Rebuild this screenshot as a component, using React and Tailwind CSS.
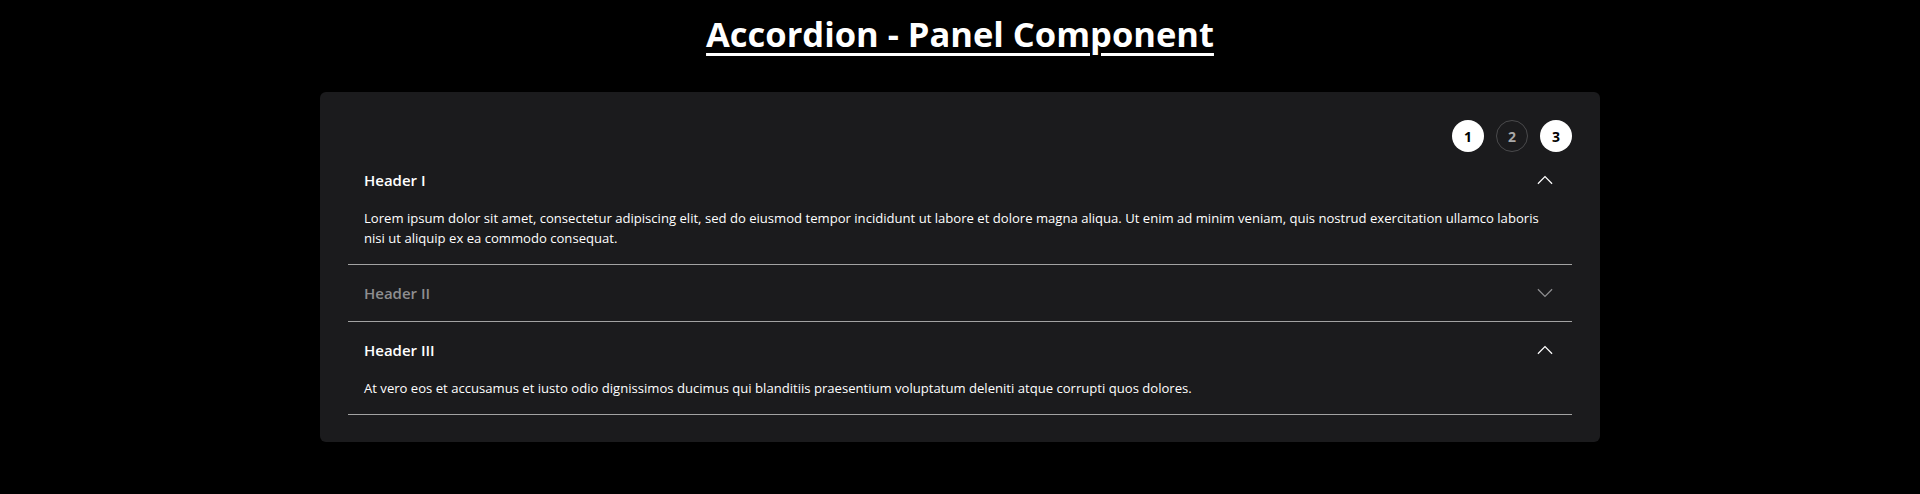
import { useState } from 'react';

const items = [
  {
    id: 1,
    title: 'Header I',
    body: 'Lorem ipsum dolor sit amet, consectetur adipiscing elit, sed do eiusmod tempor incididunt ut labore et dolore magna aliqua. Ut enim ad minim veniam, quis nostrud exercitation ullamco laboris nisi ut aliquip ex ea commodo consequat.',
  },
  {
    id: 2,
    title: 'Header II',
    body: 'Duis aute irure dolor in reprehenderit in voluptate velit esse cillum dolore eu fugiat nulla pariatur.',
  },
  {
    id: 3,
    title: 'Header III',
    body: 'At vero eos et accusamus et iusto odio dignissimos ducimus qui blanditiis praesentium voluptatum deleniti atque corrupti quos dolores.',
  },
];

function Chevron({ up }) {
  return (
    <svg viewBox="0 0 20 12" fill="none" stroke="currentColor" strokeWidth={1.5} className="w-[18px] h-[10px] mr-[2px]">
      {up ? <polyline points="1.5,10.5 10,2 18.5,10.5" /> : <polyline points="1.5,1.5 10,10 18.5,1.5" />}
    </svg>
  );
}

export default function App() {
  const [open, setOpen] = useState(new Set([1, 3]));

  const toggle = (id) => {
    setOpen(prev => {
      const next = new Set(prev);
      if (next.has(id)) next.delete(id);
      else next.add(id);
      return next;
    });
  };

  return (
    <div
      className="min-h-screen bg-black text-white pt-[10px]"
      style={{ fontFamily: '"Open Sans", "Noto Sans", sans-serif' }}
    >
      <h1 className="text-center text-[34.5px] leading-[48px] font-bold underline underline-offset-[6px] decoration-[3px]">
        Accordion - Panel Component
      </h1>

      <div className="mx-auto mt-[34px] w-[1280px] rounded-md bg-[#1b1b1d] px-7 pt-7 pb-[27px]">
        {/* toggles */}
        <div className="flex justify-end gap-3">
          {items.map(item => {
            const active = open.has(item.id);
            return (
              <button
                key={item.id}
                onClick={() => toggle(item.id)}
                className={
                  active
                    ? 'w-8 h-8 rounded-full bg-white text-black text-[14px] font-bold flex items-center justify-center cursor-pointer'
                    : 'w-8 h-8 rounded-full border border-[#4a4a4c] text-[#a9a9a9] text-[14px] font-bold flex items-center justify-center cursor-pointer'
                }
              >
                {item.id}
              </button>
            );
          })}
        </div>

        {items.map(item => {
          const active = open.has(item.id);
          return (
            <div key={item.id} className="border-b border-[#a3a3a3]">
              <button
                onClick={() => toggle(item.id)}
                className={
                  active
                    ? 'w-full h-[56px] px-4 flex items-center justify-between text-white cursor-pointer'
                    : 'w-full h-[56px] px-4 flex items-center justify-between text-[#8e8e90] cursor-pointer'
                }
              >
                <span className="text-[15px] font-semibold">{item.title}</span>
                <Chevron up={active} />
              </button>
              {active && (
                <p className="px-4 pb-4 text-[13.1px] leading-5 text-white">{item.body}</p>
              )}
            </div>
          );
        })}
      </div>
    </div>
  );
}
